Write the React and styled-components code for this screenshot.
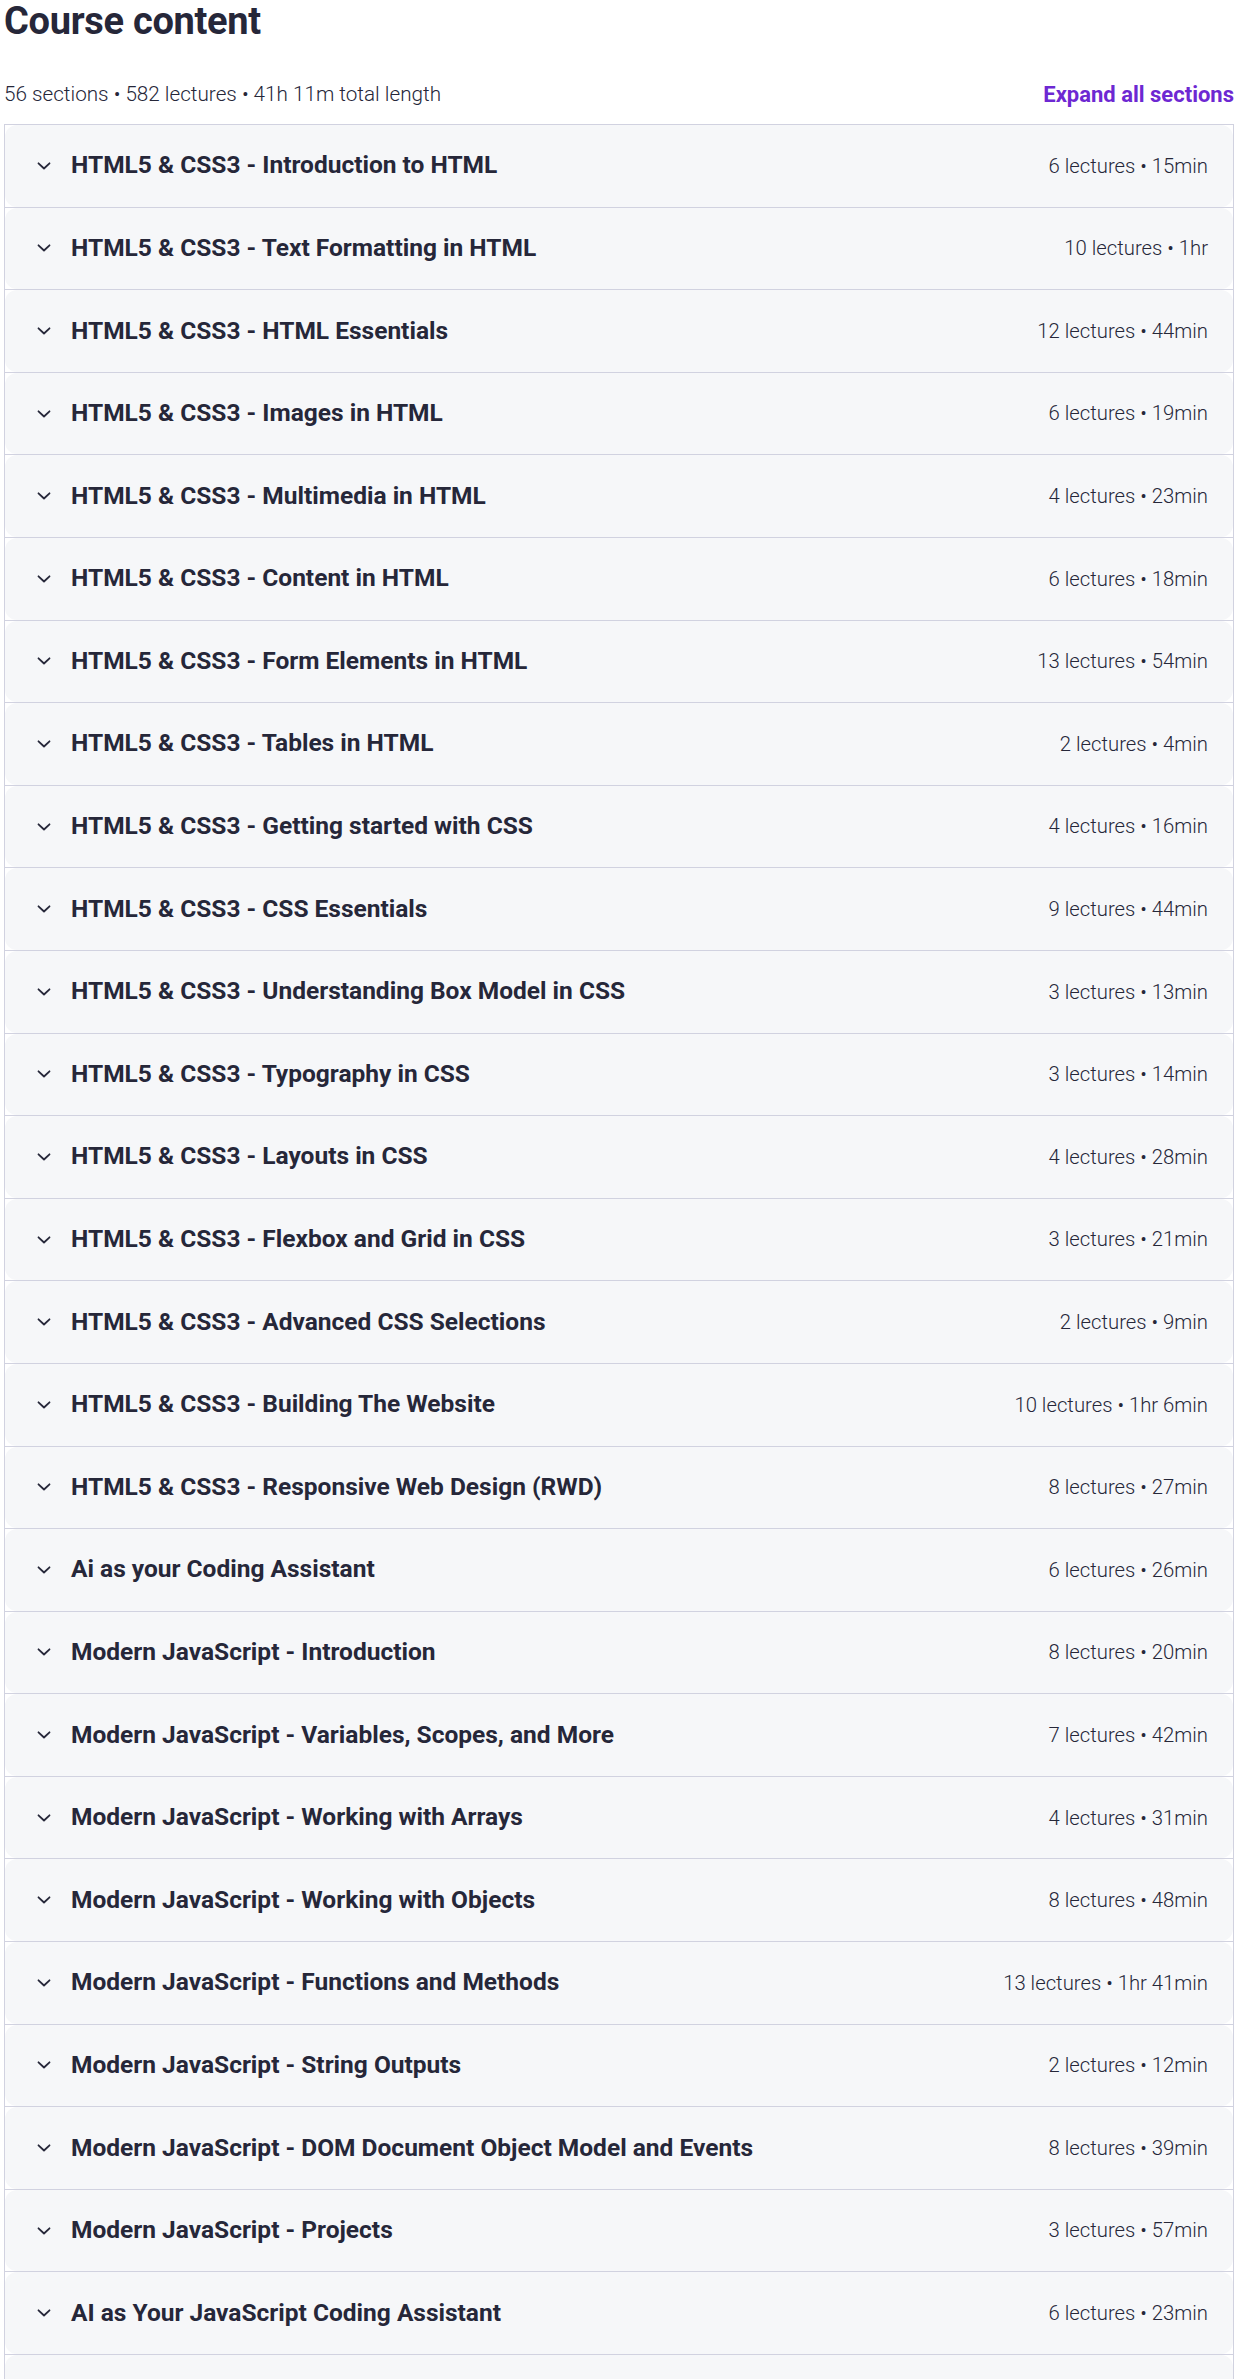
import React from 'react';
import styled, { createGlobalStyle } from 'styled-components';

const GlobalStyle = createGlobalStyle`
  html, body {
    margin: 0;
    padding: 0;
    background: #ffffff;
  }
  body {
    font-family: Roboto, "Liberation Sans", Arial, sans-serif;
    color: #262739;
    -webkit-font-smoothing: antialiased;
  }
`;

const sections = [
  ['HTML5 & CSS3 - Introduction to HTML', '6 lectures • 15min'],
  ['HTML5 & CSS3 - Text Formatting in HTML', '10 lectures • 1hr'],
  ['HTML5 & CSS3 - HTML Essentials', '12 lectures • 44min'],
  ['HTML5 & CSS3 - Images in HTML', '6 lectures • 19min'],
  ['HTML5 & CSS3 - Multimedia in HTML', '4 lectures • 23min'],
  ['HTML5 & CSS3 - Content in HTML', '6 lectures • 18min'],
  ['HTML5 & CSS3 - Form Elements in HTML', '13 lectures • 54min'],
  ['HTML5 & CSS3 - Tables in HTML', '2 lectures • 4min'],
  ['HTML5 & CSS3 - Getting started with CSS', '4 lectures • 16min'],
  ['HTML5 & CSS3 - CSS Essentials', '9 lectures • 44min'],
  ['HTML5 & CSS3 - Understanding Box Model in CSS', '3 lectures • 13min'],
  ['HTML5 & CSS3 - Typography in CSS', '3 lectures • 14min'],
  ['HTML5 & CSS3 - Layouts in CSS', '4 lectures • 28min'],
  ['HTML5 & CSS3 - Flexbox and Grid in CSS', '3 lectures • 21min'],
  ['HTML5 & CSS3 - Advanced CSS Selections', '2 lectures • 9min'],
  ['HTML5 & CSS3 - Building The Website', '10 lectures • 1hr 6min'],
  ['HTML5 & CSS3 - Responsive Web Design (RWD)', '8 lectures • 27min'],
  ['Ai as your Coding Assistant', '6 lectures • 26min'],
  ['Modern JavaScript - Introduction', '8 lectures • 20min'],
  ['Modern JavaScript - Variables, Scopes, and More', '7 lectures • 42min'],
  ['Modern JavaScript - Working with Arrays', '4 lectures • 31min'],
  ['Modern JavaScript - Working with Objects', '8 lectures • 48min'],
  ['Modern JavaScript - Functions and Methods', '13 lectures • 1hr 41min'],
  ['Modern JavaScript - String Outputs', '2 lectures • 12min'],
  ['Modern JavaScript - DOM Document Object Model and Events', '8 lectures • 39min'],
  ['Modern JavaScript - Projects', '3 lectures • 57min'],
  ['AI as Your JavaScript Coding Assistant', '6 lectures • 23min'],
];

const Chevron = () => (
  <ChevronIcon viewBox="0 0 14 8" aria-hidden="true">
    <polyline points="1.5,1.3 7,6.5 12.5,1.3" />
  </ChevronIcon>
);

const App = () => {
  return (
    <>
      <GlobalStyle />
      <Page>
        <Heading>Course content</Heading>
        <MetaBar>
          <Stats>56 sections • 582 lectures • 41h 11m total length</Stats>
          <ExpandButton>Expand all sections</ExpandButton>
        </MetaBar>
        <Accordion>
          {sections.map(([title, meta]) => (
            <SectionRow key={title}>
              <SectionPanel>
                <Chevron />
                <SectionTitle>{title}</SectionTitle>
                <SectionMeta>{meta}</SectionMeta>
              </SectionPanel>
            </SectionRow>
          ))}
          {/* next collapsed section peeking in below the fold */}
          <SectionRow>
            <SectionPanel />
          </SectionRow>
        </Accordion>
      </Page>
    </>
  );
};

const Page = styled.div`
  padding: 0 5px 0 4px;
`;

const Heading = styled.h2`
  margin: 0;
  font-size: 38px;
  line-height: 42px;
  font-weight: 700;
  color: #262739;
  letter-spacing: -0.3px;
`;

const MetaBar = styled.div`
  display: flex;
  align-items: center;
  justify-content: space-between;
  height: 30px;
  margin: 37px 0 15px;
`;

const Stats = styled.span`
  font-size: 20.7px;
  font-weight: 300;
  color: #262739;
`;

const ExpandButton = styled.button`
  border: none;
  background: none;
  padding: 0;
  font-family: inherit;
  font-size: 22px;
  font-weight: 700;
  color: #6d28d2;
  cursor: pointer;
`;

const Accordion = styled.div`
  border: 1px solid #d1d2e0;
  border-bottom: none;
`;

const SectionRow = styled.div`
  border-bottom: 1px solid #d1d2e0;
`;

const SectionPanel = styled.div`
  display: flex;
  align-items: center;
  height: 81.6px;
  padding: 0 25px 0 32px;
  background: #f6f7f9;
  border-radius: 12px;
`;

const ChevronIcon = styled.svg`
  width: 14px;
  height: 8px;
  flex: none;
  fill: none;
  stroke: #262739;
  stroke-width: 1.8;
  stroke-linecap: round;
  stroke-linejoin: round;
`;

const SectionTitle = styled.span`
  flex: 1;
  margin-left: 20px;
  font-size: 24.5px;
  line-height: 1.1;
  font-weight: 700;
  color: #262739;
`;

const SectionMeta = styled.span`
  font-size: 20.3px;
  line-height: 1.1;
  font-weight: 300;
  color: #262739;
`;

export default App;
